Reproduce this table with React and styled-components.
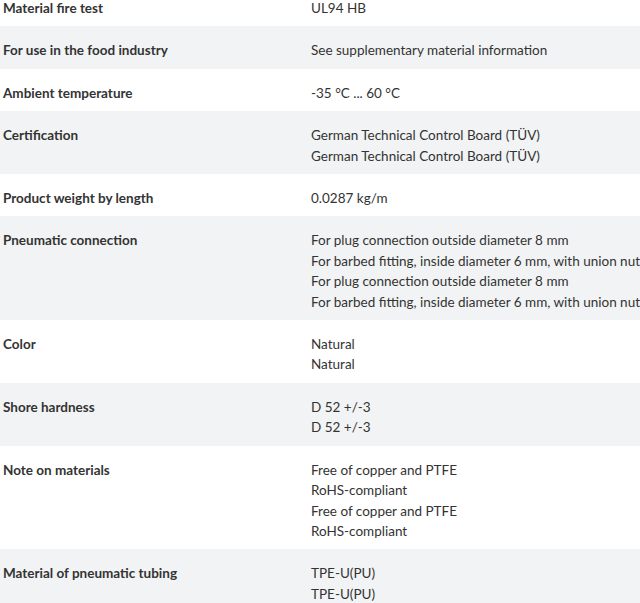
import styled, { createGlobalStyle } from 'styled-components';

const GlobalStyle = createGlobalStyle`
  body {
    margin: 0;
    background: #fff;
    overflow: hidden;
  }
`;

const specs = [
  { label: 'Material fire test', values: ['UL94 HB'] },
  { label: 'For use in the food industry', values: ['See supplementary material information'] },
  { label: 'Ambient temperature', values: ['-35 °C ... 60 °C'] },
  { label: 'Certification', values: ['German Technical Control Board (TÜV)', 'German Technical Control Board (TÜV)'] },
  { label: 'Product weight by length', values: ['0.0287 kg/m'] },
  {
    label: 'Pneumatic connection',
    values: [
      'For plug connection outside diameter 8 mm',
      'For barbed fitting, inside diameter 6 mm, with union nut',
      'For plug connection outside diameter 8 mm',
      'For barbed fitting, inside diameter 6 mm, with union nut',
    ],
  },
  { label: 'Color', values: ['Natural', 'Natural'] },
  { label: 'Shore hardness', values: ['D 52 +/-3', 'D 52 +/-3'] },
  {
    label: 'Note on materials',
    values: ['Free of copper and PTFE', 'RoHS-compliant', 'Free of copper and PTFE', 'RoHS-compliant'],
  },
  { label: 'Material of pneumatic tubing', values: ['TPE-U(PU)', 'TPE-U(PU)'] },
];

const App = () => {
  return (
    <>
      <GlobalStyle />
      <SpecTable>
        {specs.map((row, i) => (
          <Row key={row.label} $striped={i % 2 === 1}>
            <Label>{row.label}</Label>
            <Values>
              {row.values.map((v, j) => (
                <Value key={j}>{v}</Value>
              ))}
            </Values>
          </Row>
        ))}
      </SpecTable>
    </>
  );
};

export default App;

const SpecTable = styled.div`
  margin-top: -16px;
  width: 640px;
  font-family: Lato, 'Noto Sans', sans-serif;
  font-size: 13.5px;
  color: #333;
`;

const Row = styled.div`
  display: grid;
  grid-template-columns: 308px 1fr;
  padding: 14px 0 8px 3px;
  background: ${(p) => (p.$striped ? '#f2f3f4' : '#fff')};
  line-height: 20.4px;
`;

const Label = styled.div`
  font-weight: 700;
  white-space: nowrap;
`;

const Values = styled.div`
  display: flex;
  flex-direction: column;
`;

const Value = styled.div`
  white-space: nowrap;
`;
